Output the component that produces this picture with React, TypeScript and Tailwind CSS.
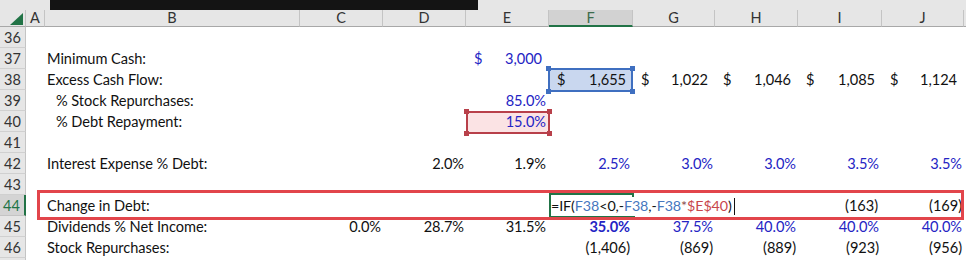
import React from "react";

const GRID =
  "grid grid-cols-[26px_19px_255px_83px_83px_83px_84px_82px_83px_84px_82px_2px]";

const BLUE = "text-[#2424c4]";
const BLACK = "text-[#111111]";

type CellProps = {
  children?: React.ReactNode;
  className?: string;
};

function Cell({ children, className = "" }: CellProps) {
  return (
    <div className={`relative h-[21px] leading-[22px] whitespace-nowrap ${className}`}>
      {children}
    </div>
  );
}

function Acct({ v, color = BLACK }: { v: string; color?: string }) {
  return (
    <div className={`flex justify-between pl-[8px] pr-[7px] ${color}`}>
      <span>$</span>
      <span>{v}</span>
    </div>
  );
}

function RowHead({ n, active = false }: { n?: number; active?: boolean }) {
  return (
    <div
      className={
        active
          ? "h-[21px] leading-[21px] bg-[#d4d4d4] border-b border-[#c4c4c4] border-r-2 border-r-[#217346] text-[#217346] text-center text-[14.5px] pr-[1px] tracking-normal"
          : "h-[21px] leading-[21px] bg-[#e6e6e6] border-b border-[#d0d0d0] border-r border-r-[#c4c4c4] text-[#333333] text-center text-[14.5px] tracking-normal"
      }
    >
      {n}
    </div>
  );
}

function Handle({ pos, color }: { pos: string; color: string }) {
  return <div className={`absolute w-[5px] h-[5px] ${color} ${pos}`} />;
}

export default function App() {
  const letters = ["A", "B", "C", "D", "E", "F", "G", "H", "I", "J"];
  return (
    <div className="relative w-[966px] h-[260px] overflow-hidden bg-white font-['Lato','Open_Sans',sans-serif] text-[14.6px] tracking-[-0.05px] text-[#111111]">
      {/* top strip */}
      <div className="relative h-[10px] bg-[#e6e6e6]">
        <div className="absolute left-[50px] top-0 w-[428px] h-[10px] bg-[#141414]" />
      </div>

      {/* column headers */}
      <div className={`${GRID} h-[17px]`}>
        <div className="relative h-[17px] bg-[#e6e6e6] border-r border-[#c4c4c4] border-b border-b-[#a8a8a8]">
          <svg className="absolute left-[10px] top-[3px]" width="13" height="12" viewBox="0 0 13 12">
            <polygon points="13,0 13,12 0,12" fill="#217346" />
          </svg>
        </div>
        {letters.map((l) =>
          l === "F" ? (
            <div
              key={l}
              className="h-[17px] leading-[16px] text-center text-[14.5px] bg-[#d2d2d2] text-[#3d6b4d] border-r border-[#c4c4c4] border-b-2 border-b-[#217346]"
            >
              {l}
            </div>
          ) : (
            <div
              key={l}
              className="h-[17px] leading-[16px] text-center text-[14.5px] bg-[#e6e6e6] text-[#333333] border-r border-[#c4c4c4] border-b border-b-[#a8a8a8]"
            >
              {l}
            </div>
          )
        )}
        <div className="h-[17px] bg-[#e6e6e6] border-b border-b-[#a8a8a8]" />
      </div>

      {/* row 36 */}
      <div className={GRID}>
        <RowHead n={36} />
        <Cell /><Cell /><Cell /><Cell /><Cell /><Cell /><Cell /><Cell /><Cell /><Cell /><Cell />
      </div>

      {/* row 37 */}
      <div className={GRID}>
        <RowHead n={37} />
        <Cell />
        <Cell className="pl-[2px]">Minimum Cash:</Cell>
        <Cell />
        <Cell />
        <Cell><Acct v="3,000" color={BLUE} /></Cell>
        <Cell /><Cell /><Cell /><Cell /><Cell /><Cell />
      </div>

      {/* row 38 */}
      <div className={GRID}>
        <RowHead n={38} />
        <Cell />
        <Cell className="pl-[2px]">Excess Cash Flow:</Cell>
        <Cell />
        <Cell />
        <Cell />
        <Cell>
          <div className="absolute left-[-1px] right-0 top-[-1px] bottom-[-2px] bg-[#c9d7ef] border-2 border-[#3f6fc0]" />
          <Handle pos="left-[-3px] top-[-3px]" color="bg-[#3f6fc0]" />
          <Handle pos="right-[-2px] top-[-3px]" color="bg-[#3f6fc0]" />
          <Handle pos="left-[-3px] bottom-[-4px]" color="bg-[#3f6fc0]" />
          <Handle pos="right-[-2px] bottom-[-4px]" color="bg-[#3f6fc0]" />
          <div className="relative">
            <Acct v="1,655" />
          </div>
        </Cell>
        <Cell><Acct v="1,022" /></Cell>
        <Cell><Acct v="1,046" /></Cell>
        <Cell><Acct v="1,085" /></Cell>
        <Cell><Acct v="1,124" /></Cell>
        <Cell />
      </div>

      {/* row 39 */}
      <div className={GRID}>
        <RowHead n={39} />
        <Cell />
        <Cell className="pl-[11px]">% Stock Repurchases:</Cell>
        <Cell />
        <Cell />
        <Cell className={`text-right pr-[3px] ${BLUE}`}>85.0%</Cell>
        <Cell /><Cell /><Cell /><Cell /><Cell /><Cell />
      </div>

      {/* row 40 */}
      <div className={GRID}>
        <RowHead n={40} />
        <Cell />
        <Cell className="pl-[11px]">% Debt Repayment:</Cell>
        <Cell />
        <Cell />
        <Cell>
          <div className="absolute left-0 right-[-1px] top-0 bottom-[-2px] bg-[#fbe3e4] border-2 border-[#b8404a]" />
          <Handle pos="left-[-2px] top-[-2px]" color="bg-[#b8404a]" />
          <Handle pos="right-[-3px] top-[-2px]" color="bg-[#b8404a]" />
          <Handle pos="left-[-2px] bottom-[-4px]" color="bg-[#b8404a]" />
          <Handle pos="right-[-3px] bottom-[-4px]" color="bg-[#b8404a]" />
          <div className={`relative text-right pr-[3px] ${BLUE}`}>15.0%</div>
        </Cell>
        <Cell /><Cell /><Cell /><Cell /><Cell /><Cell />
      </div>

      {/* row 41 */}
      <div className={GRID}>
        <RowHead n={41} />
        <Cell /><Cell /><Cell /><Cell /><Cell /><Cell /><Cell /><Cell /><Cell /><Cell /><Cell />
      </div>

      {/* row 42 */}
      <div className={GRID}>
        <RowHead n={42} />
        <Cell />
        <Cell className="pl-[2px]">Interest Expense % Debt:</Cell>
        <Cell />
        <Cell className="text-right pr-[2px]">2.0%</Cell>
        <Cell className="text-right pr-[3px]">1.9%</Cell>
        <Cell className={`text-right pr-[3px] ${BLUE}`}>2.5%</Cell>
        <Cell className={`text-right pr-[2px] ${BLUE}`}>3.0%</Cell>
        <Cell className={`text-right pr-[2px] ${BLUE}`}>3.0%</Cell>
        <Cell className={`text-right pr-[3px] ${BLUE}`}>3.5%</Cell>
        <Cell className={`text-right pr-[2px] ${BLUE}`}>3.5%</Cell>
        <Cell />
      </div>

      {/* row 43 */}
      <div className={GRID}>
        <RowHead n={43} />
        <Cell /><Cell /><Cell /><Cell /><Cell /><Cell /><Cell /><Cell /><Cell /><Cell /><Cell />
      </div>

      {/* row 44 */}
      <div className={`${GRID} relative`}>
        <RowHead n={44} active />
        <Cell />
        <Cell className="pl-[2px]">Change in Debt:</Cell>
        <Cell />
        <Cell />
        <Cell />
        <Cell>
          <div className="absolute left-0 right-[-1px] top-[-2px] bottom-[-2px] border-2 border-[#217346]" />
          <div className="absolute right-[-2px] bottom-[-4px] w-[4px] h-[4px] bg-[#217346]" />
          <div className="relative z-10 ml-[2px] mt-[1px] h-[19px] leading-[20px] inline-flex items-center bg-white pr-[1px] text-[14.3px] tracking-[-0.1px]">
            <span>=IF(</span>
            <span className="text-[#4677be]">F38</span>
            <span>&lt;0,-</span>
            <span className="text-[#4677be]">F38</span>
            <span>,-</span>
            <span className="text-[#4677be]">F38</span>
            <span className="text-[#8a4a4a]">*</span>
            <span className="text-[#c8464c]">$E$40</span>
            <span>)</span>
            <span className="ml-[2px] inline-block w-[1px] h-[17px] bg-[#111111]" />
          </div>
        </Cell>
        <Cell />
        <Cell />
        <Cell className="text-right pr-[4px]">(163)</Cell>
        <Cell className="text-right pr-[2px]">(169)</Cell>
        <Cell />
        <div className="pointer-events-none absolute left-[37px] w-[927px] top-[-5px] h-[30px] border-[3px] border-[#e2454b]" />
      </div>

      {/* row 45 */}
      <div className={GRID}>
        <RowHead n={45} />
        <Cell />
        <Cell className="pl-[2px]">Dividends % Net Income:</Cell>
        <Cell className="text-right pr-[2px]">0.0%</Cell>
        <Cell className="text-right pr-[2px]">28.7%</Cell>
        <Cell className="text-right pr-[3px]">31.5%</Cell>
        <Cell className={`text-right pr-[3px] font-bold ${BLUE}`}>35.0%</Cell>
        <Cell className={`text-right pr-[2px] ${BLUE}`}>37.5%</Cell>
        <Cell className={`text-right pr-[2px] ${BLUE}`}>40.0%</Cell>
        <Cell className={`text-right pr-[3px] ${BLUE}`}>40.0%</Cell>
        <Cell className={`text-right pr-[2px] ${BLUE}`}>40.0%</Cell>
        <Cell />
      </div>

      {/* row 46 */}
      <div className={GRID}>
        <RowHead n={46} />
        <Cell />
        <Cell className="pl-[2px]">Stock Repurchases:</Cell>
        <Cell />
        <Cell />
        <Cell />
        <Cell className="text-right pr-[3px]">(1,406)</Cell>
        <Cell className="text-right pr-[2px]">(869)</Cell>
        <Cell className="text-right pr-[2px]">(889)</Cell>
        <Cell className="text-right pr-[3px]">(923)</Cell>
        <Cell className="text-right pr-[2px]">(956)</Cell>
        <Cell />
      </div>

      {/* row 47 partial */}
      <div className={GRID}>
        <RowHead />
      </div>
    </div>
  );
}
